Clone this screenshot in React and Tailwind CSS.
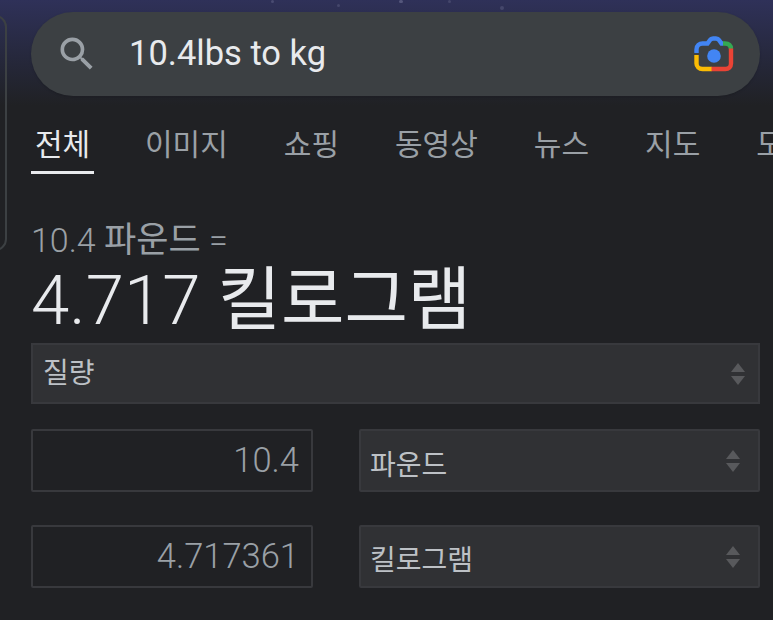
const tabs = ['이미지', '쇼핑', '동영상', '뉴스', '지도', '도구'];

function SearchIcon() {
  return (
    <svg viewBox="0 0 24 24" className="w-[44px] h-[44px] shrink-0 text-[#9aa0a6]" fill="currentColor">
      <path d="M15.5 14h-.79l-.28-.27A6.471 6.471 0 0 0 16 9.5 6.5 6.5 0 1 0 9.5 16c1.61 0 3.09-.59 4.23-1.57l.27.28v.79l5 4.99L20.49 19l-4.99-5zm-6 0C7.01 14 5 11.99 5 9.5S7.01 5 9.5 5 14 7.01 14 9.5 11.99 14 9.5 14z" />
    </svg>
  );
}

function CameraIcon() {
  return (
    <svg viewBox="0 0 40 36" className="w-[40px] h-[36px] shrink-0" fill="none">
      <circle cx="20" cy="20" r="6.8" fill="#4285f4" />
      <path d="M2.5 17V13.5C2.5 9.5 5.5 7.5 8.5 7.5H13.5L16 4C16.5 3.2 17.5 2.5 19 2.5H22C23.5 2.5 24.5 3.2 25 4L27.5 7.5H29" stroke="#4285f4" strokeWidth="4.4" />
      <path d="M29 7.5H31C34.5 7.5 36.8 9.5 37 13" stroke="#34a853" strokeWidth="4.4" />
      <path d="M37 12.5V27.5C37 31 34.5 33 31.5 33H17" stroke="#ea4335" strokeWidth="4.4" />
      <path d="M17.5 33H8.5C5 33 2.5 30.5 2.5 27.5V19" stroke="#fbbc04" strokeWidth="4.4" />
    </svg>
  );
}

function Stepper() {
  return (
    <svg viewBox="0 0 14 22" className="w-[14px] h-[22px] shrink-0" fill="#58595c">
      <path d="M7 0L14 9H0z" />
      <path d="M0 13H14L7 22z" />
    </svg>
  );
}

function Select({ label, className, pr, labelClass }) {
  return (
    <div className={`flex items-center justify-between bg-[#303134] border-2 border-[#38393d] ${pr} ${className}`}>
      <span className={`text-[28px] text-[#bdc1c6] ${labelClass}`}>{label}</span>
      <Stepper />
    </div>
  );
}

function NumberBox({ value, pr }) {
  return (
    <div className={`w-[282px] shrink-0 flex items-center justify-end border-2 border-[#38393d] rounded-[2px] ${pr}`}>
      <span className="text-[34.5px] font-light text-[#9aa0a6]">{value}</span>
    </div>
  );
}

export default function App() {
  return (
    <div className="relative w-[773px] h-[620px] overflow-hidden bg-[#202124] font-['Roboto','Noto_Sans_CJK_KR',sans-serif]">
      {/* edge of the card behind the page */}
      <div className="absolute left-[-30px] top-[15px] w-[37px] h-[236px] border-2 border-[#3c4043] rounded-[12px]" />

      {/* wallpaper specks above the search bar */}
      <div className="absolute left-[271px] top-0 w-[3px] h-[3px] rounded-full bg-[#4a4c72]" />
      <div className="absolute left-[337px] top-[4px] w-[3px] h-[3px] rounded-full bg-[#45476b]" />
      <div className="absolute left-[399px] top-0 w-[4px] h-[3px] rounded-full bg-[#55577c]" />
      <div className="absolute left-[448px] top-0 w-[3px] h-[3px] rounded-full bg-[#45476b]" />
      <div className="absolute left-[500px] top-[6px] w-[4px] h-[4px] rounded-full bg-[#45476b]" />

      <div className="h-[106px] pt-[12px] pl-[31px] bg-gradient-to-b from-[#2f3159] via-[#252739] via-60% to-[#202124]">
        <div className="flex items-center w-[729px] h-[84px] rounded-full bg-[#3c4043] pl-[24px] pr-[26px] shadow-sm">
          <SearchIcon />
          <span className="ml-[30px] text-[34.5px] text-[#e8eaed] whitespace-nowrap">10.4lbs to kg</span>
          <div className="ml-auto">
            <CameraIcon />
          </div>
        </div>
      </div>

      <div className="flex items-start pl-[31px] h-[84px]">
        <div className="w-[63px] h-[68px] shrink-0 flex flex-col items-center">
          <span className="mt-[19px] text-[30px] leading-[40px] text-[#e8eaed] whitespace-nowrap">전체</span>
          <div className="mt-auto w-full h-[3px] bg-[#e8eaed]" />
        </div>
        <div className="flex shrink-0 gap-[56px] ml-[51px] mt-[19px] text-[30px] leading-[40px] text-[#9aa0a6] whitespace-nowrap">
          {tabs.map((t) => (
            <span key={t}>{t}</span>
          ))}
        </div>
      </div>

      <div className="pl-[31px] pt-[30px]">
        <div className="text-[34px] leading-[40px] font-light text-[#9aa0a6] whitespace-nowrap">
          10.4 <span className="font-normal text-[35px]">파운드</span> =
        </div>
        <div className="h-[76px] mt-[2px] text-[69px] leading-[76px] font-light text-[#e8eaed] whitespace-nowrap">
          4.717 <span className="font-normal">킬로그램</span>
        </div>

        <Select label="질량" className="w-[729px] h-[61px] mt-[4px] pl-[10px]" pr="pr-[13px]" />

        <div className="flex gap-[46px] mt-[25px] h-[63px] w-[729px]">
          <NumberBox value="10.4" pr="pr-[12px]" />
          <Select label="파운드" className="w-[401px] pl-[9px] rounded-[2px]" pr="pr-[18px]" labelClass="pt-[11px]" />
        </div>
        <div className="flex gap-[46px] mt-[33px] h-[63px] w-[729px]">
          <NumberBox value="4.717361" pr="pr-[12px]" />
          <Select label="킬로그램" className="w-[401px] pl-[9px] rounded-[2px]" pr="pr-[18px]" labelClass="pt-[8px]" />
        </div>
      </div>
    </div>
  );
}
